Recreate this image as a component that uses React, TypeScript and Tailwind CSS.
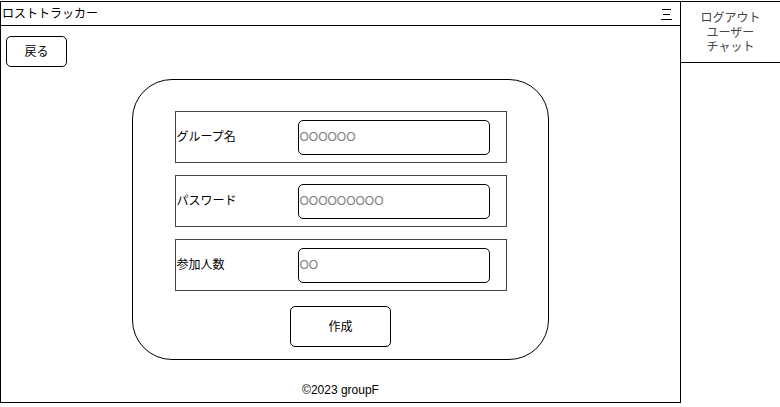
const jp = "font-['Liberation_Sans','Noto_Sans_CJK_JP',sans-serif]"

const fields = [
  { label: "グループ名", placeholder: "OOOOOO" },
  { label: "パスワード", placeholder: "OOOOOOOOO" },
  { label: "参加人数", placeholder: "OO" },
]

const MenuIcon = () => (
  <svg width="12" height="14" viewBox="0 0 12 14" className="mt-[1px]">
    <line x1="1" y1="2.5" x2="10" y2="2.5" stroke="#000" strokeWidth="1" />
    <line x1="2" y1="7.5" x2="9" y2="7.5" stroke="#000" strokeWidth="1" />
    <line x1="0" y1="12.5" x2="11" y2="12.5" stroke="#000" strokeWidth="1" />
  </svg>
)

const FieldRow = ({ label, placeholder }: { label: string; placeholder: string }) => (
  <div className="flex h-[52px] items-center border-[1.5px] border-[#444] pl-[1px]">
    <span className="w-[121px] text-[12px] text-black">{label}</span>
    <div className="flex h-[35px] w-[192px] items-center rounded-[5px] border border-black pl-[1px] text-[12px] text-[#808080]">
      {placeholder}
    </div>
  </div>
)

export default function App() {
  return (
    <div className={`flex h-[407px] w-[780px] bg-white pt-[1px] ${jp}`}>
      <div className="flex h-[402px] w-[681px] flex-col border border-black">
        <header className="flex h-[24px] shrink-0 items-center justify-between border-b border-black pl-[1px] pr-[7px]">
          <span className="text-[12px] text-black">ロストトラッカー</span>
          <MenuIcon />
        </header>

        <main className="flex flex-1 flex-col">
          <button className="ml-[5px] mt-[10px] flex h-[31px] w-[61px] items-center justify-center rounded-[5px] border border-black text-[12px] text-black">
            戻る
          </button>

          <section className="mx-auto mt-[12px] flex h-[281px] w-[417px] flex-col items-center rounded-[40px] border border-black pt-[31px]">
            <div className="flex w-[332px] flex-col gap-[12px]">
              {fields.map((f) => (
                <FieldRow key={f.label} label={f.label} placeholder={f.placeholder} />
              ))}
            </div>
            <button className="mt-[15px] flex h-[41px] w-[101px] items-center justify-center rounded-[5px] border border-black text-[12px] text-black">
              作成
            </button>
          </section>

          <footer className="mt-[23px] text-center text-[12px] leading-[14px] text-black">
            ©2023 groupF
          </footer>
        </main>
      </div>

      <nav className="flex h-[62px] w-[99px] flex-col items-center border-y border-black pt-[9px] text-[12px] leading-[14.5px] text-[#444]">
        <span>ログアウト</span>
        <span>ユーザー</span>
        <span>チャット</span>
      </nav>
    </div>
  )
}
